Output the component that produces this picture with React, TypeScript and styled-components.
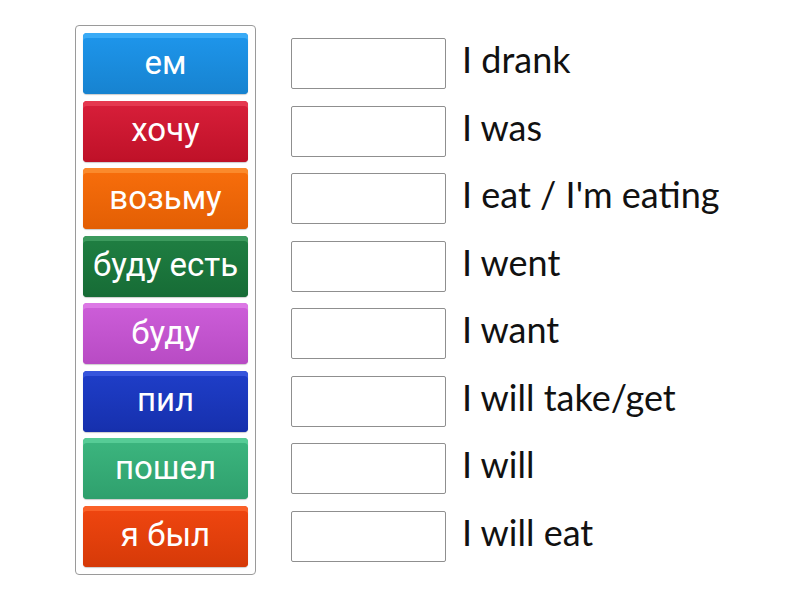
import React from 'react';
import styled, { createGlobalStyle } from 'styled-components';

const GlobalStyle = createGlobalStyle`
  html, body {
    margin: 0;
    padding: 0;
    background: #ffffff;
  }
`;

const Page = styled.div`
  display: flex;
  align-items: flex-start;
  gap: 35px;
  padding: 25px 0 0 75px;
`;

const TileBank = styled.div`
  display: flex;
  flex-direction: column;
  gap: 6.5px;
  width: 165px;
  padding: 7px;
  border: 1px solid #9a9a9a;
  border-radius: 4px;
`;

const Tile = styled.div<{ $color: string; $light: string; $dark: string }>`
  height: 61px;
  box-sizing: border-box;
  padding-bottom: 3px;
  border-radius: 4px;
  display: flex;
  align-items: center;
  justify-content: center;
  color: #ffffff;
  font-family: Roboto, 'Liberation Sans', sans-serif;
  font-size: 33px;
  white-space: nowrap;
  background: linear-gradient(${({ $color }) => $color}, ${({ $dark }) => $dark});
  box-shadow:
    inset 0 5px 0 ${({ $light }) => $light},
    inset 0 -3px 0 ${({ $dark }) => $dark},
    0 1px 1px rgba(0, 0, 0, 0.2);
`;

const Targets = styled.div`
  display: flex;
  flex-direction: column;
  gap: 6.5px;
  padding-top: 8px;
`;

const Row = styled.div`
  height: 61px;
  display: flex;
  align-items: center;
  gap: 16px;
`;

const DropBox = styled.div`
  width: 153px;
  height: 49px;
  border: 1px solid #8f8f8f;
  border-radius: 2px;
  background: #ffffff;
`;

const Label = styled.span`
  font-family: Lato, 'Open Sans', sans-serif;
  font-size: 36px;
  color: #111111;
  white-space: nowrap;
  margin-top: -9px;
`;

const tiles = [
  { text: 'ем', color: '#1e96ec', light: '#3aabf6', dark: '#1783d0' },
  { text: 'хочу', color: '#d81f3a', light: '#e5384f', dark: '#bf1128' },
  { text: 'возьму', color: '#f86e0c', light: '#fb8a2c', dark: '#e35f04' },
  { text: 'буду есть', color: '#1f7f42', light: '#3c9a5d', dark: '#176c36' },
  { text: 'буду', color: '#cd5ed9', light: '#dc78e5', dark: '#b84bc4' },
  { text: 'пил', color: '#1f3ec9', light: '#3755dc', dark: '#1630ad' },
  { text: 'пошел', color: '#3cb67f', light: '#56cc96', dark: '#2fa06d' },
  { text: 'я был', color: '#f04610', light: '#fa6128', dark: '#d63a08' },
];

const labels = [
  'I drank',
  'I was',
  "I eat / I'm eating",
  'I went',
  'I want',
  'I will take/get',
  'I will',
  'I will eat',
];

export default function App() {
  return (
    <>
      <GlobalStyle />
      <Page>
        <TileBank>
          {tiles.map((t) => (
            <Tile key={t.text} $color={t.color} $light={t.light} $dark={t.dark}>
              {t.text}
            </Tile>
          ))}
        </TileBank>
        <Targets>
          {labels.map((l) => (
            <Row key={l}>
              <DropBox />
              <Label>{l}</Label>
            </Row>
          ))}
        </Targets>
      </Page>
    </>
  );
}
